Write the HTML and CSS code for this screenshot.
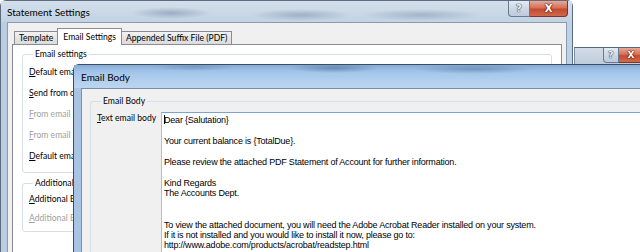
FILE: index.html
```html
<!DOCTYPE html>
<html>
<head>
<meta charset="utf-8">
<link rel="stylesheet" href="styles.css">
</head>
<body>
<div class="desktop">
  <div class="win win-back">
    <div class="titlebar">
      <span class="title">Statement Settings</span>
      <div class="caption">
        <span class="cbtn help">?</span><span class="cbtn close">X</span>
      </div>
    </div>
    <div class="client">
      <div class="tabs">
        <span class="tab">Template</span>
        <span class="tab active">Email Settings</span>
        <span class="tab">Appended Suffix File (PDF)</span>
      </div>
      <div class="panel">
        <fieldset class="group g1">
          <legend>Email settings</legend>
          <div class="row"><u>D</u>efault email format</div>
          <div class="row"><u>S</u>end from current user</div>
          <div class="row off"><u>F</u>rom email address</div>
          <div class="row off"><u>F</u>rom email display name</div>
          <div class="row"><u>D</u>efault email subject</div>
        </fieldset>
        <fieldset class="group g2">
          <legend>Additional Emails</legend>
          <div class="row"><u>A</u>dditional BCC</div>
          <div class="row off"><u>A</u>dditional BCC address</div>
        </fieldset>
      </div>
    </div>
  </div>

  <div class="win win-third">
    <div class="caption small">
      <span class="cbtn help">?</span><span class="cbtn close">X</span>
    </div>
  </div>

  <div class="win win-front">
    <div class="titlebar front-title">
      <span class="title">Email Body</span>
    </div>
    <div class="client front-client">
      <fieldset class="group g3">
        <legend>Email Body</legend>
        <div class="field">
          <span class="flabel"><u>T</u>ext email body</span>
          <div class="textbox"><span class="caret"></span>Dear {Salutation}<br><br>Your current balance is {TotalDue}.<br><br>Please review the attached PDF Statement of Account for further information.<br><br>Kind Regards<br>The Accounts Dept.<br><br><br>To view the attached document, you will need the Adobe Acrobat Reader installed on your system.<br>If it is not installed and you would like to install it now, please go to:<br>http://www.adobe.com/products/acrobat/readstep.html</div>
        </div>
      </fieldset>
    </div>
  </div>
</div>
</body>
</html>
```

FILE: styles.css
```css
* { box-sizing: border-box; }
html, body { margin: 0; padding: 0; }
body {
  width: 640px;
  height: 252px;
  overflow: hidden;
  background: #ffffff;
  font-family: "Lato", "Noto Sans", sans-serif;
  font-size: 9.5px;
  color: #000;
}
.desktop { position: relative; width: 640px; height: 252px; overflow: hidden; }
.win { position: absolute; }

/* ---------- back window ---------- */
.win-back {
  left: 0; top: 0;
  width: 573px; height: 300px;
  border: 1px solid #5c6c80;
  border-radius: 6px 6px 0 0;
  background: linear-gradient(to right, #b9cde3, #c8d8ea 40%, #bfd1e6);
  display: flex;
  flex-direction: column;
}
.titlebar {
  height: 21px;
  flex: none;
  display: flex;
  align-items: flex-start;
  justify-content: space-between;
  background:
    radial-gradient(ellipse 40px 6px at 170px 12px, rgba(120,140,165,.55), transparent),
    radial-gradient(ellipse 50px 6px at 300px 14px, rgba(120,140,165,.5), transparent),
    radial-gradient(ellipse 60px 6px at 420px 14px, rgba(120,140,165,.45), transparent),
    linear-gradient(to bottom, #d4dfeb, #c9d7e6 60%, #c3d3e4);
}
.title {
  padding-left: 6px;
  line-height: 23px;
  font-size: 10px;
  color: #000;
}
.caption { display: flex; margin-right: 4px; }
.cbtn {
  display: flex; align-items: center; justify-content: center;
  height: 16px;
  font-family: "DejaVu Sans", sans-serif;
  font-weight: bold;
  font-size: 10px;
  color: #fff;
  border: 1px solid #6a7a8e;
  border-top: none;
}
.help {
  width: 22px;
  background: linear-gradient(to bottom, #e4ebf3, #cdd8e5 50%, #bccadb);
  border-radius: 0 0 0 4px;
  color: #eef2f7;
  text-shadow: 0 0 1px #3d4d63, 0 0 1px #3d4d63, 0 0 1px #3d4d63;
}
.close {
  width: 38px;
  background: linear-gradient(to bottom, #e8a996, #d6705a 45%, #c44b32 55%, #d0694c);
  border-color: #7f3526;
  border-left: none;
  border-radius: 0 0 4px 0;
  text-shadow: 0 0 1px #5a1c10, 0 0 1px #5a1c10, 0 0 2px #5a1c10;
}

.client {
  flex: 1;
  margin: 0 5px 0 6px;
  border: 1px solid #8a9bb0;
  background: #f0f0f0;
  padding: 0 4px;
  display: flex;
  flex-direction: column;
}
.tabs {
  margin-top: 5px;
  height: 17px;
  padding-left: 2px;
  display: flex;
  align-items: flex-end;
  position: relative;
  z-index: 1;
}
.tab {
  height: 13px;
  margin-bottom: 1px;
  padding: 0 4px;
  border: 1px solid #898c95;
  border-bottom: none;
  background: linear-gradient(to bottom, #f3f3f3, #e4e4e4 50%, #dcdcdc);
  font-size: 8.6px;
  line-height: 13px;
  white-space: nowrap;
}
.tab.active {
  height: 17px;
  margin: 0 -1px 0 -1px;
  background: #fff;
  line-height: 16px;
  padding: 0 5px;
}
.panel {
  margin-top: -1px;
  flex: 1;
  border: 1px solid #898c95;
  background: #fff;
  padding: 4px 9px 0 9px;
}
.group {
  margin: 0;
  border: 1px solid #d5dfe5;
  border-radius: 3px;
  padding: 2px 6px 5px 6px;
  min-width: 0;
}
.group legend {
  padding: 0 2px;
  margin-left: 4px;
  line-height: 11px;
  font-size: 8.6px;
}
.row {
  height: 21px;
  line-height: 21px;
  font-size: 8.6px;
  white-space: nowrap;
}
.row.off { color: #a0a0a0; }
.g2 { margin-top: 5px; padding: 1px 6px 3px 6px; }
.g2 .row { height: 19px; line-height: 19px; }

/* ---------- third window strip ---------- */
.win-third {
  left: 574px; top: 47px;
  width: 70px; height: 18px;
  border-top: 1px solid #56677d;
  border-left: 1px solid #7d8ea4;
  background: linear-gradient(to bottom, #d3dce7, #bfcbda);
  padding-left: 28px;
}
.caption.small { margin: 0; }
.caption.small .cbtn { height: 15px; font-size: 9px; }
.caption.small .help { width: 17px; }
.caption.small .close { width: 27px; }

/* ---------- front window ---------- */
.win-front {
  left: 73px; top: 64px;
  width: 600px; height: 220px;
  border: 1px solid #3e4c5f;
  border-radius: 6px 6px 0 0;
  background: linear-gradient(to right, #a8c4e2, #b7cfe8);
  display: flex;
  flex-direction: column;
}
.front-title {
  height: 23px;
  background:
    radial-gradient(ellipse 45px 5px at 260px 3px, rgba(70,105,150,.55), transparent),
    radial-gradient(ellipse 60px 5px at 400px 4px, rgba(70,105,150,.45), transparent),
    radial-gradient(ellipse 40px 4px at 120px 2px, rgba(70,105,150,.35), transparent),
    linear-gradient(to bottom, #86acd6, #a3c5e9 30%, #b1cfee 65%, #bcd5ee);
}
.front-title .title { padding-left: 7px; line-height: 25px; font-size: 10px; }
.front-client {
  margin: 0 0 0 7px;
  padding: 7px 0 0 8px;
  border: 1px solid #7890ab;
  border-right: none;
  border-bottom: none;
  display: block;
}
.g3 {
  padding: 5px 0 0 6px;
  border-right: none;
  border-bottom: none;
  height: 300px;
}
.field { display: flex; align-items: flex-start; }
.flabel {
  width: 64px;
  flex: none;
  line-height: 12px;
  font-size: 8.6px;
  white-space: nowrap;
}
.textbox {
  flex: 1;
  background: #fff;
  border: 1px solid #7da2ce;
  border-left-color: #a7c0df;
  padding: 2px 0 0 2px;
  height: 200px;
  font-family: "Liberation Sans", Arial, sans-serif;
  font-size: 9px;
  letter-spacing: -0.2px;
  line-height: 10.45px;
  white-space: nowrap;
}
.caret {
  display: inline-block;
  width: 1px;
  height: 9px;
  background: #000;
  margin-right: -1px;
  vertical-align: -1px;
}
```
